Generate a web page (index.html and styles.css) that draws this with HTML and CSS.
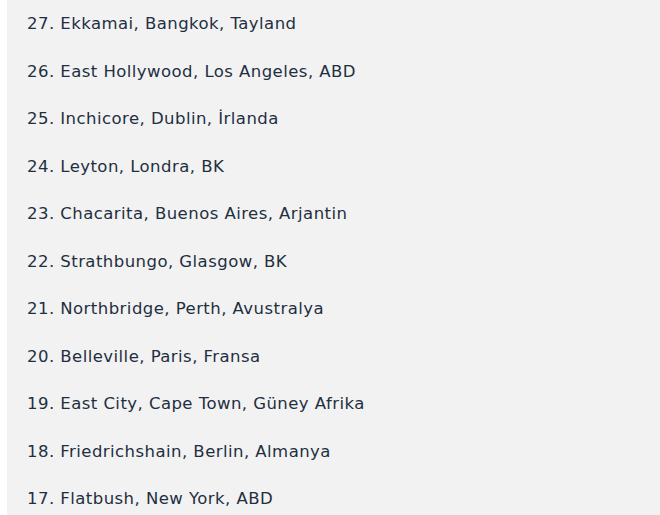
FILE: index.html
```html
<!DOCTYPE html>
<html lang="tr">
<head>
<meta charset="utf-8">
<link rel="stylesheet" href="styles.css">
</head>
<body>
<ol class="places">
<li class="place">27. Ekkamai, Bangkok, Tayland</li>
<li class="place">26. East Hollywood, Los Angeles, ABD</li>
<li class="place">25. Inchicore, Dublin, İrlanda</li>
<li class="place">24. Leyton, Londra, BK</li>
<li class="place">23. Chacarita, Buenos Aires, Arjantin</li>
<li class="place">22. Strathbungo, Glasgow, BK</li>
<li class="place">21. Northbridge, Perth, Avustralya</li>
<li class="place">20. Belleville, Paris, Fransa</li>
<li class="place">19. East City, Cape Town, Güney Afrika</li>
<li class="place">18. Friedrichshain, Berlin, Almanya</li>
<li class="place">17. Flatbush, New York, ABD</li>
</ol>
</body>
</html>
```
FILE: styles.css
```css
html, body {
  margin: 0;
  padding: 0;
  background: #ffffff;
}
body {
  overflow: hidden;
  height: 515px;
}
.places {
  list-style: none;
  margin: 0 0 0 7px;
  padding: 0 0 0 20px;
  background: #f2f2f2;
  font-family: "DejaVu Sans", sans-serif;
  font-size: 16.5px;
  letter-spacing: 0.45px;
  color: #1f2f3f;
}
.place {
  height: 47.5px;
  line-height: 47.5px;
  white-space: nowrap;
}
```
